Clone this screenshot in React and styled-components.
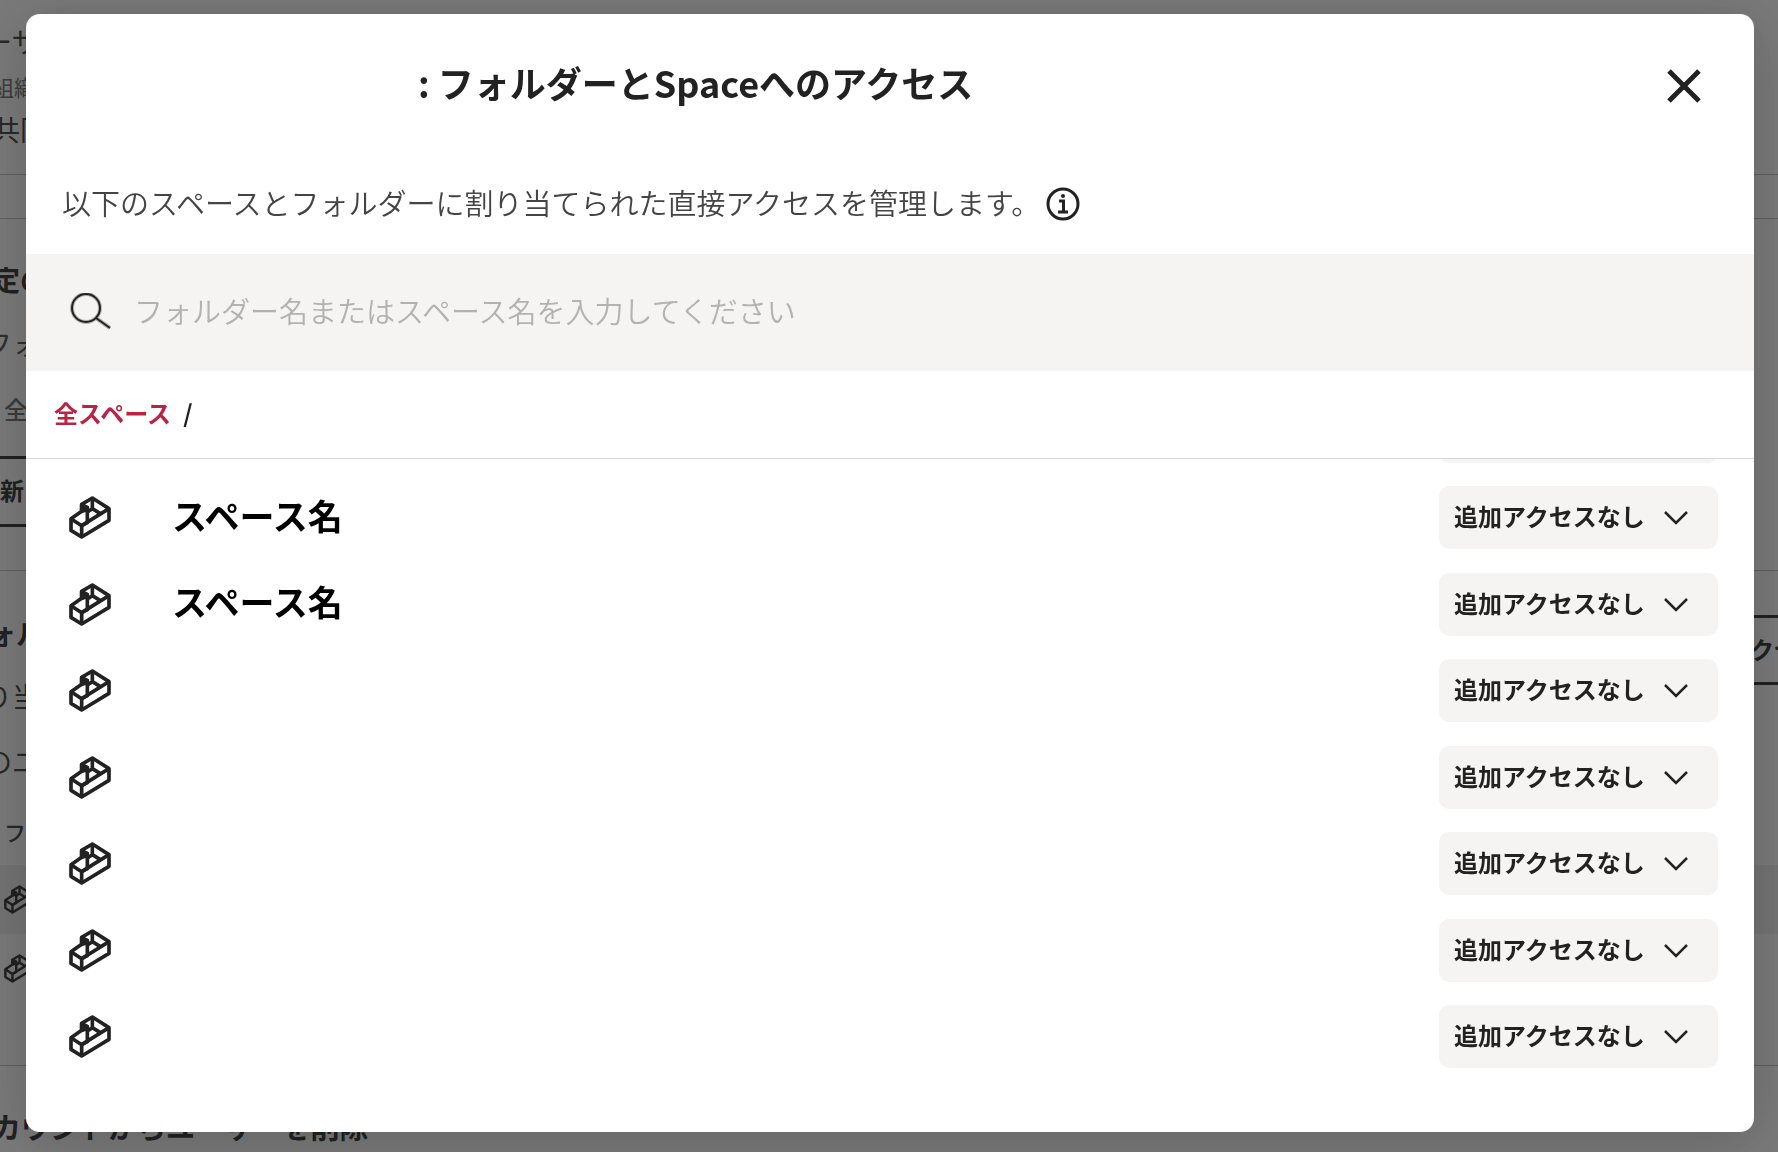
import React from 'react';
import styled, { createGlobalStyle } from 'styled-components';

const GlobalStyle = createGlobalStyle`
    * {
        box-sizing: border-box;
    }

    body {
        margin: 0;
        overflow: hidden;
        background-color: #fff;
        color: #222;
        font-family: "Noto Sans CJK JP", sans-serif;
    }

    button, input, select {
        font-family: inherit;
        color: inherit;
    }
`;

/* page behind the dialog */

const Page = styled.main`
    height: 100vh;
    margin-left: -16px;
    overflow: hidden;
    white-space: nowrap;
`;

const Section = styled.section`
    display: flex;
    flex-direction: column;
    height: ${props => props.$height}px;
    padding-top: ${props => props.$top || 0}px;
    border-bottom: 1px solid #bbb;
`;

const PageText = styled.p`
    margin: 0;
    padding-left: ${props => props.$indent || 0}px;
    font-size: ${props => props.$size || 28}px;
    font-weight: ${props => props.$weight || 400};
    line-height: ${props => props.$line}px;
    color: ${props => props.$color || '#333'};
`;

const OutlineButton = styled.button`
    align-self: ${props => (props.$right ? 'flex-end' : 'flex-start')};
    width: 240px;
    height: ${props => props.$height}px;
    margin-right: ${props => (props.$right ? '-196px' : '0')};
    padding: 0 16px 4px;
    border: 3px solid #222;
    border-left-width: 0;
    background: none;
    font-size: 24px;
    font-weight: 700;
    text-align: left;
`;

const SplitRow = styled.div`
    display: flex;
    justify-content: space-between;
    height: 70px;
`;

const PageRow = styled.div`
    display: flex;
    align-items: center;
    height: 69px;
    padding-left: 20px;
    background-color: ${props => (props.$shaded ? '#eee' : 'transparent')};
`;

/* dialog */

const Overlay = styled.div`
    position: fixed;
    inset: 0;
    display: flex;
    padding: 14px 24px 20px 26px;
    background-color: rgba(34, 34, 34, 0.6);
`;

const Modal = styled.div`
    flex: 1;
    display: flex;
    flex-direction: column;
    min-width: 0;
    border-radius: 14px;
    background-color: #fff;
    box-shadow: 0 8px 60px rgba(0, 0, 0, 0.2);
    overflow: hidden;
`;

const Header = styled.header`
    display: flex;
    align-items: center;
    justify-content: space-between;
    flex: none;
    height: 144px;
    padding: 0 46px 0 36px;
`;

const Title = styled.h1`
    display: flex;
    margin: 0;
    padding-bottom: 8px;
    font-size: 36px;
    font-weight: 700;
    line-height: 48px;
`;

const UserName = styled.span`
    width: 356px;
`;

const IconButton = styled.button`
    display: flex;
    padding: 0;
    border: 0;
    background: none;
    cursor: pointer;
`;

const Description = styled.div`
    display: flex;
    align-items: center;
    flex: none;
    gap: 6px;
    height: 96px;
    padding: 0 0 4px 36px;
`;

const DescriptionText = styled.p`
    margin: 0;
    padding-bottom: 4px;
    font-size: 29px;
    font-weight: 350;
    line-height: 40px;
    color: #444;
`;

const SearchBar = styled.label`
    display: flex;
    align-items: center;
    flex: none;
    gap: 22px;
    height: 117px;
    padding: 0 36px 0 44px;
    background-color: #f5f4f2;
`;

const SearchInput = styled.input`
    flex: 1;
    height: 48px;
    padding: 0 0 6px;
    border: 0;
    outline: 0;
    background: none;
    font-size: 29px;
    font-weight: 350;

    &::placeholder {
        color: #b3b2b0;
        opacity: 1;
    }
`;

const Breadcrumb = styled.nav`
    display: flex;
    align-items: center;
    flex: none;
    gap: 12px;
    height: 88px;
    padding: 0 0 4px 28px;
    border-bottom: 1px solid #d9d9d9;
    font-size: 24px;
    font-weight: 700;
`;

const BreadcrumbLink = styled.a`
    color: #ba2443;
    text-decoration: none;
`;

const ListPane = styled.div`
    flex: 1;
    display: flex;
    flex-direction: column;
    justify-content: flex-end;
    min-height: 0;
    padding: 0 36px 64px 43px;
    overflow: hidden;
`;

const List = styled.ul`
    display: flex;
    flex: none;
    flex-direction: column;
    justify-content: space-between;
    height: 668px;
    margin: 0;
    padding: 0;
    list-style: none;
`;

const Item = styled.li`
    display: flex;
    align-items: center;
    height: 63px;
`;

const ItemName = styled.span`
    flex: 1;
    margin-left: 61px;
    padding-bottom: 6px;
    font-size: 35px;
    font-weight: 700;
    line-height: 44px;
    color: #000;
`;

const SelectBox = styled.div`
    position: relative;
    width: 279px;
    height: 63px;
`;

const Select = styled.select`
    appearance: none;
    width: 100%;
    height: 100%;
    padding: 0 64px 4px 15px;
    border: 0;
    border-radius: 10px;
    background-color: #f5f4f2;
    font-size: 24px;
    font-weight: 600;
`;

const Chevron = styled.svg`
    position: absolute;
    top: 24px;
    right: 29px;
    pointer-events: none;
`;

function SpaceIcon({ size = 42 }) {
    return (
        <svg width={size} height={size + 1} viewBox="0 0 126 129" fill="none" stroke="#222" strokeWidth="11" strokeLinejoin="round">
            <path d="M70 6 L120 38 V73 L38 123 L6 103 V68 L38 46 V25 Z" />
            <path d="M6 68 L38 89 L120 38 M38 89 V123" />
            <path d="M70 6 V38 L94 53 M70 38 L55 48" />
            <path d="M36 47 L55 36 V80 L38 89" />
            <path d="M38 26 L55 34 L53 42 L38 46 Z" fill="#222" />
        </svg>
    );
}

function SearchIcon() {
    const shape = 'M29 14 a14 14 0 1 1 -28 0 a14 14 0 1 1 28 0 M25 24 L39 34';
    return (
        <svg width="42" height="40" viewBox="-1 -1 42 40" fill="none">
            <path d={shape} stroke="#222" strokeOpacity="0.3" strokeWidth="4" />
            <path d={shape} stroke="#222" strokeWidth="2" />
        </svg>
    );
}

function AccessSelect() {
    return (
        <SelectBox>
            <Select aria-label="アクセス">
                <option>追加アクセスなし</option>
            </Select>
            <Chevron width="26" height="16" viewBox="0 0 26 16" fill="none" stroke="#222" strokeWidth="2.500">
                <path d="M2 2 L13 13 L24 2" />
            </Chevron>
        </SelectBox>
    );
}

const spaces = ['', 'スペース名', 'スペース名', '', '', '', '', ''];

function Background() {
    return (
        <Page>
            <Section $height={175} $top={18}>
                <PageText $line={46}>ーサ</PageText>
                <PageText $line={44} $size={22} $indent={8} $color="#666">組織</PageText>
                <PageText $line={42} $indent={8}>共同</PageText>
            </Section>
            <Section $height={44} />
            <Section $height={352} $top={38}>
                <PageText $line={44} $indent={8} $weight={700} $color="#222">定の</PageText>
                <PageText $line={84} $color="#444">フォ</PageText>
                <PageText $line={48} $size={24} $indent={20} $weight={500} $color="#666">全</PageText>
                <PageText $line={23}>&nbsp;</PageText>
                <OutlineButton $height={71}>新</OutlineButton>
            </Section>
            <Section $height={495} $top={44}>
                <SplitRow>
                    <PageText $line={36} $indent={4} $weight={700} $color="#222">ォル</PageText>
                    <OutlineButton $right $height={70}>クセ</OutlineButton>
                </SplitRow>
                <PageText $line={22}>り当</PageText>
                <PageText $line={108}>のユ</PageText>
                <PageText $line={32} $size={22} $indent={20} $weight={500}>フ</PageText>
                <PageText $line={18}>&nbsp;</PageText>
                <PageRow $shaded><SpaceIcon size={28} /></PageRow>
                <PageRow><SpaceIcon size={28} /></PageRow>
            </Section>
            <PageText $line={120} $size={29} $indent={8} $weight={700} $color="#222">カウントからユーザーを削除</PageText>
        </Page>
    );
}

function App() {
    return (
        <>
            <GlobalStyle />
            <Background />
            <Overlay>
                <Modal role="dialog" aria-modal="true">
                    <Header>
                        <Title><UserName />: フォルダーとSpaceへのアクセス</Title>
                        <IconButton aria-label="閉じる">
                            <svg width="48" height="48" viewBox="0 0 48 48" stroke="#222" strokeWidth="5">
                                <path d="M9 9 L39 39 M39 9 L9 39" />
                            </svg>
                        </IconButton>
                    </Header>
                    <Description>
                        <DescriptionText>以下のスペースとフォルダーに割り当てられた直接アクセスを管理します。</DescriptionText>
                        <IconButton aria-label="詳細">
                            <svg width="34" height="34" viewBox="0 0 34 34" fill="none" stroke="#222" strokeWidth="3">
                                <circle cx="17" cy="17" r="15" />
                                <circle cx="17" cy="9" r="2" fill="#222" stroke="none" />
                                <path d="M13 14 H17.500 V25 M12 25 H22" />
                            </svg>
                        </IconButton>
                    </Description>
                    <SearchBar>
                        <SearchIcon />
                        <SearchInput type="text" placeholder="フォルダー名またはスペース名を入力してください" />
                    </SearchBar>
                    <Breadcrumb>
                        <BreadcrumbLink href="#">全スペース</BreadcrumbLink>
                        <span>/</span>
                    </Breadcrumb>
                    <ListPane>
                        <List>
                            {spaces.map((name, i) => (
                                <Item key={i}>
                                    <SpaceIcon />
                                    <ItemName>{name}</ItemName>
                                    <AccessSelect />
                                </Item>
                            ))}
                        </List>
                    </ListPane>
                </Modal>
            </Overlay>
        </>
    );
}

export default App;
